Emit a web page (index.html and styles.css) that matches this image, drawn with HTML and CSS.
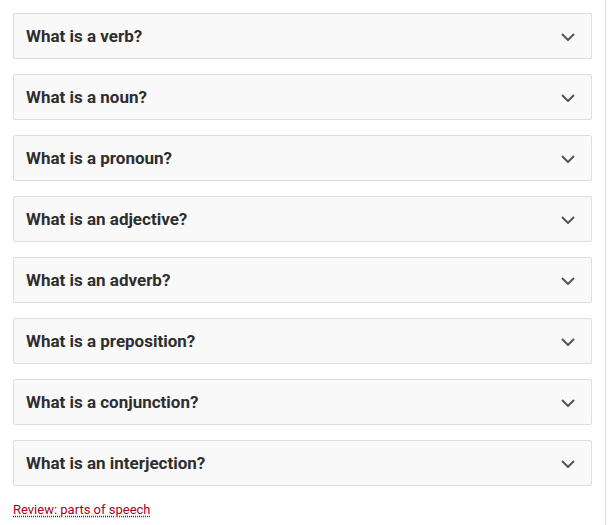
FILE: index.html
```html
<!DOCTYPE html>
<html>
<head>
<meta charset="utf-8">
<link rel="stylesheet" href="styles.css">
</head>
<body>
<div class="page">
  <div class="faq">
    <div class="item"><span class="q">What is a verb?</span><svg class="chev" viewBox="0 0 14 8"><path d="M1 1 L7 7 L13 1"/></svg></div>
    <div class="item"><span class="q">What is a noun?</span><svg class="chev" viewBox="0 0 14 8"><path d="M1 1 L7 7 L13 1"/></svg></div>
    <div class="item"><span class="q">What is a pronoun?</span><svg class="chev" viewBox="0 0 14 8"><path d="M1 1 L7 7 L13 1"/></svg></div>
    <div class="item"><span class="q">What is an adjective?</span><svg class="chev" viewBox="0 0 14 8"><path d="M1 1 L7 7 L13 1"/></svg></div>
    <div class="item"><span class="q">What is an adverb?</span><svg class="chev" viewBox="0 0 14 8"><path d="M1 1 L7 7 L13 1"/></svg></div>
    <div class="item"><span class="q">What is a preposition?</span><svg class="chev" viewBox="0 0 14 8"><path d="M1 1 L7 7 L13 1"/></svg></div>
    <div class="item"><span class="q">What is a conjunction?</span><svg class="chev" viewBox="0 0 14 8"><path d="M1 1 L7 7 L13 1"/></svg></div>
    <div class="item"><span class="q">What is an interjection?</span><svg class="chev" viewBox="0 0 14 8"><path d="M1 1 L7 7 L13 1"/></svg></div>
  </div>
  <a class="review" href="#">Review: parts of speech</a>
</div>
</body>
</html>
```
FILE: styles.css
```css
html, body {
  margin: 0;
  padding: 0;
  background: #fff;
}
.page {
  width: 606px;
  height: 525px;
  box-sizing: border-box;
  border-right: 1px solid #dcdcdc;
  padding: 13px 13px 0 13px;
  font-family: Roboto, "Liberation Sans", sans-serif;
}
.faq {
  display: flex;
  flex-direction: column;
  gap: 15px;
}
.item {
  height: 46px;
  box-sizing: border-box;
  border: 1px solid #dedede;
  border-radius: 2px;
  background: #f9f9f9;
  display: flex;
  align-items: center;
  justify-content: space-between;
  padding: 0 16px 0 12px;
}
.q {
  font-size: 17px;
  font-weight: 700;
  color: #2e2e2e;
}
.chev {
  width: 14px;
  height: 8px;
  fill: none;
  stroke: #555;
  stroke-width: 2;
  margin-top: 2px;
}
.review {
  display: inline-block;
  margin-top: 16px;
  font-size: 13px;
  line-height: 16px;
  color: #a8001c;
  text-decoration: underline dotted #800080;
  text-underline-offset: 2px;
}
```
